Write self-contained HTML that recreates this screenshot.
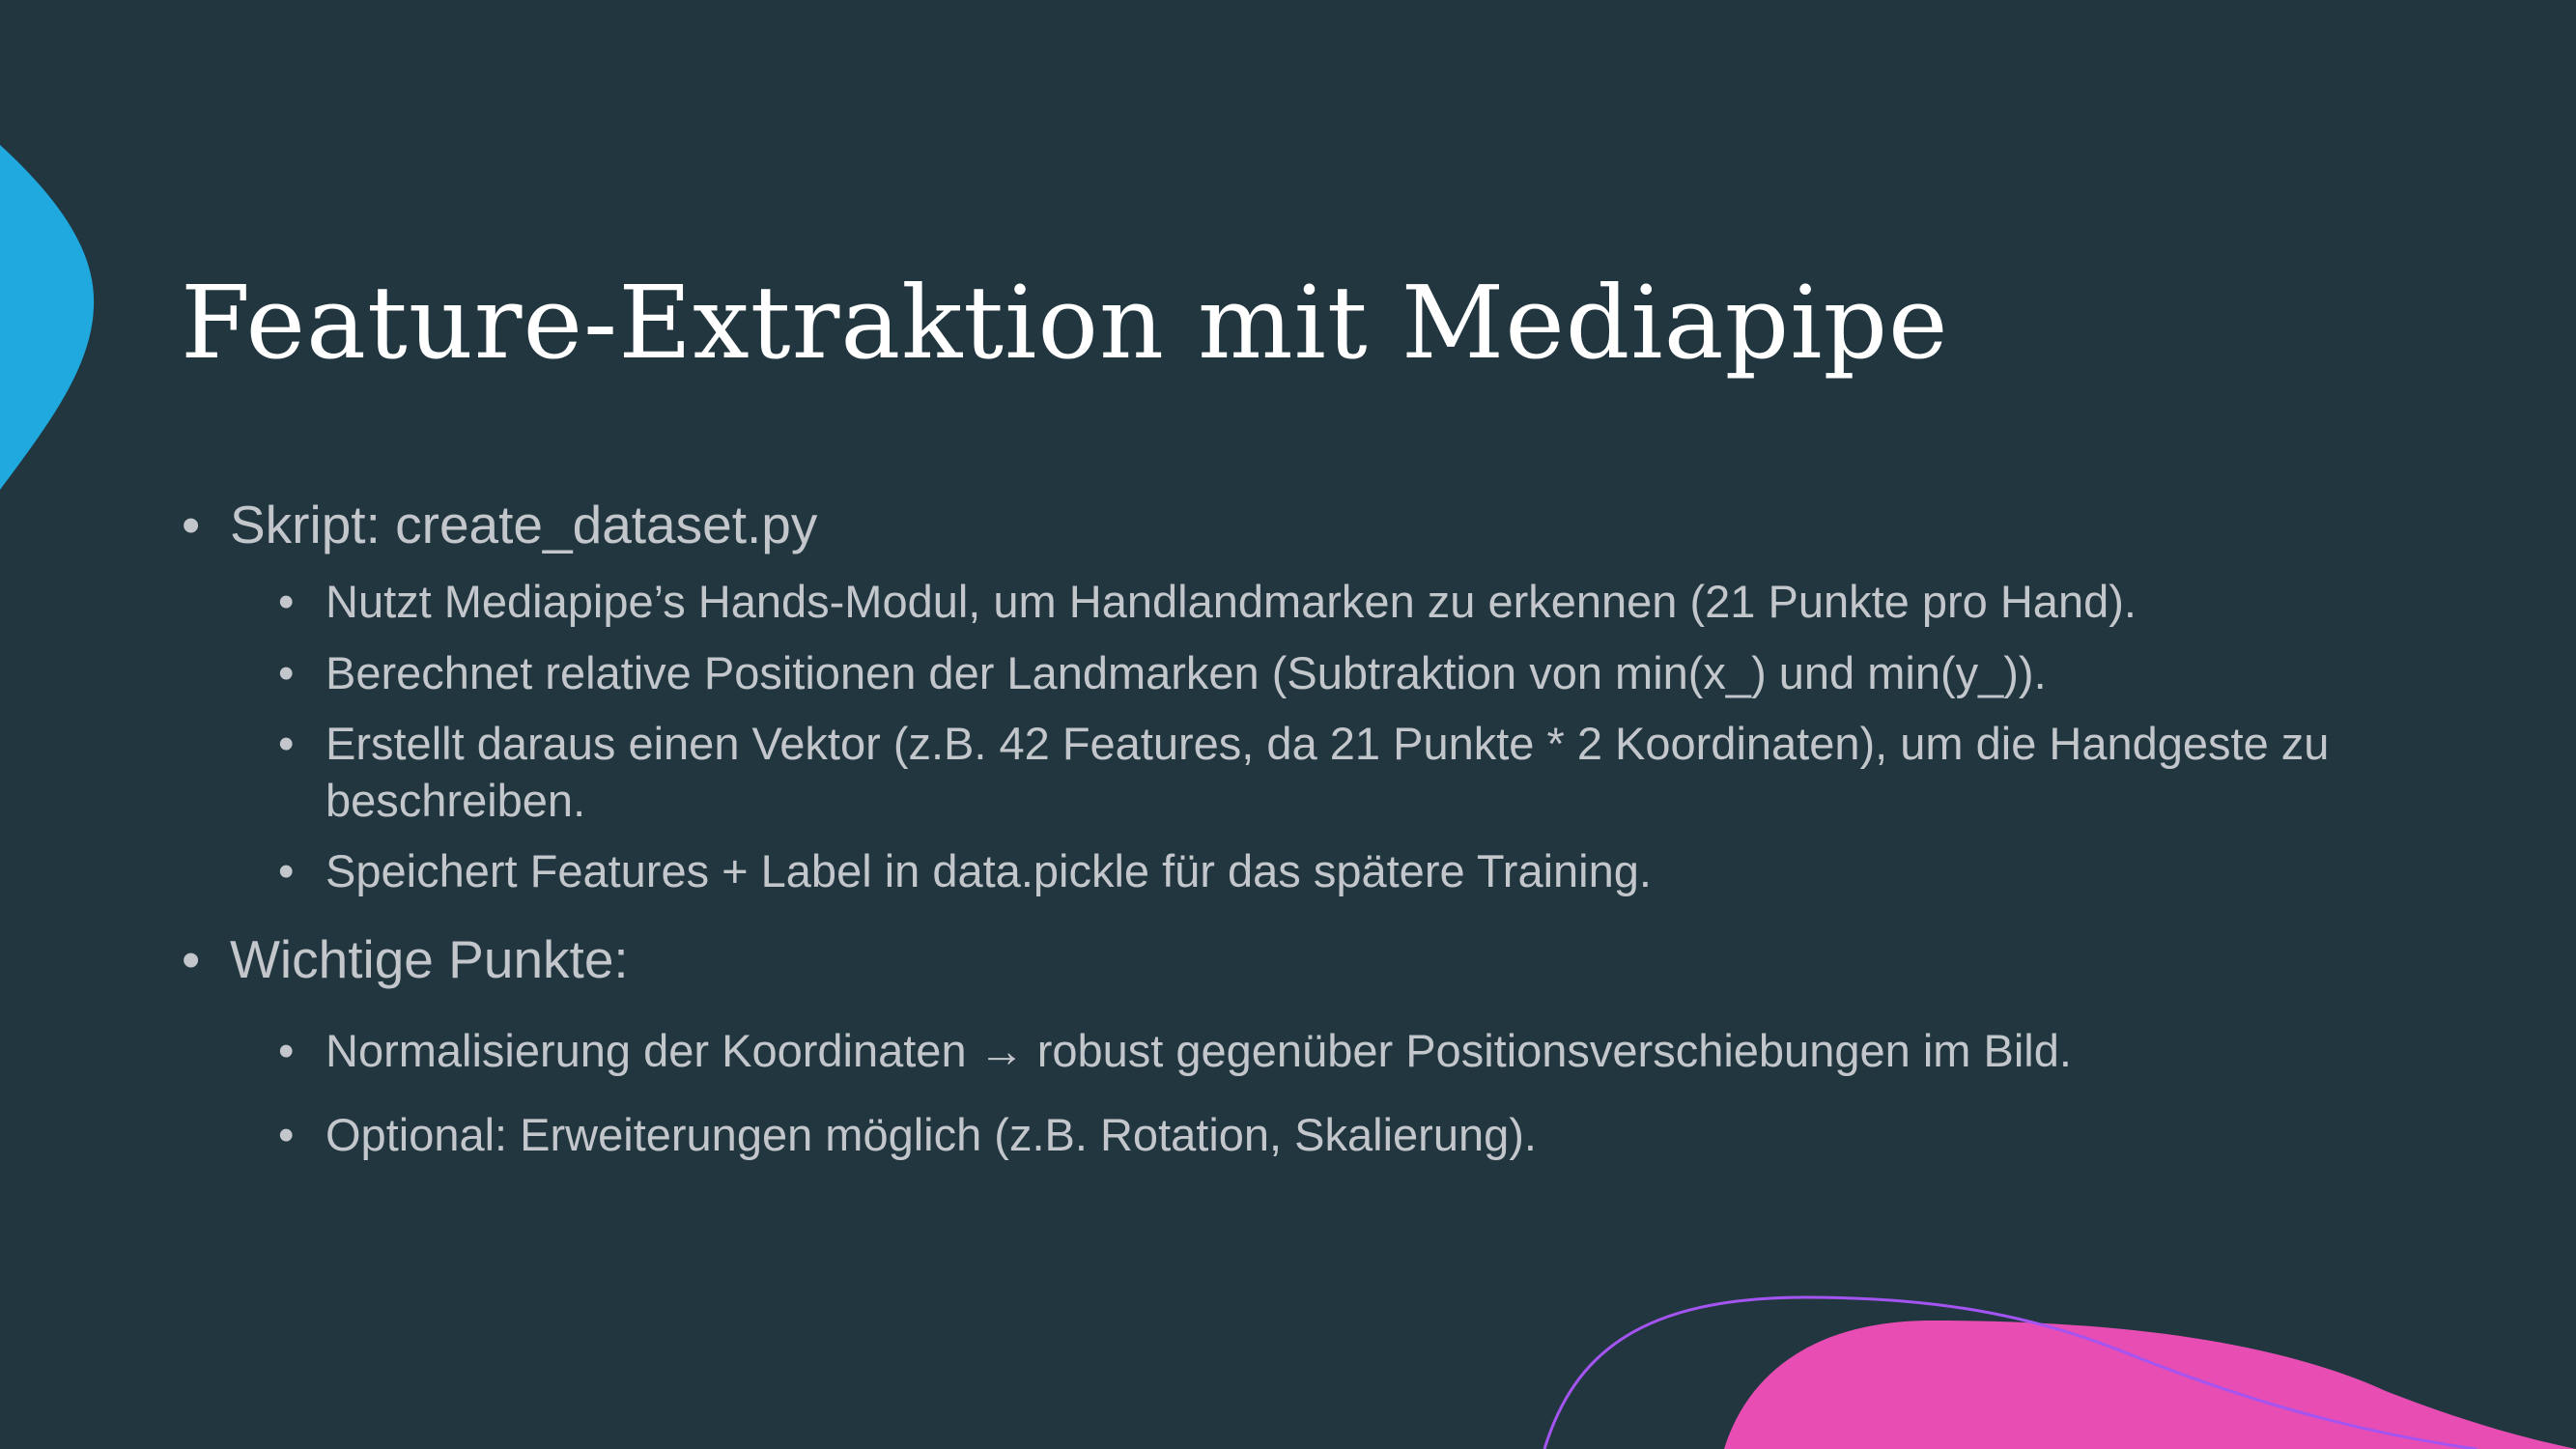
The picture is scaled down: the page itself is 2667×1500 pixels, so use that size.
<!DOCTYPE html>
<html><head><meta charset="utf-8"><style>
html,body{margin:0;padding:0}
body{width:2667px;height:1500px;background:#223640;position:relative;overflow:hidden;font-family:"Liberation Sans",Arial,sans-serif;color:#c3c7cb}
.t{position:absolute;line-height:1;white-space:nowrap}
.title{font-family:"DejaVu Serif","Liberation Serif",serif;font-size:104px;color:#fff;left:187px;top:282px;letter-spacing:1px}
.m{font-size:55px}
.s{font-size:47px}
</style></head><body>
<svg width="2667" height="1500" style="position:absolute;left:0;top:0">
<path d="M0,150 C60,205 100,260 97,318 C95,380 50,440 0,507 Z" fill="#1fa9de"/>
<path d="M1785,1500 C1810,1420 1880,1367 2000,1367 C2200,1367 2360,1390 2470,1440 C2560,1475 2620,1490 2667,1500 Z" fill="#e74db3"/>
<path d="M1599,1500 C1630,1400 1700,1343 1870,1343 C2000,1343 2100,1360 2200,1400 C2300,1440 2420,1480 2564,1500" fill="none" stroke="#a454f0" stroke-width="3"/>
</svg>
<div class="t title">Feature-Extraktion mit Mediapipe</div>
<div class="t m" style="left:188px;top:516px">•</div>
<div class="t m" style="left:238px;top:516px">Skript: create_dataset.py</div>
<div class="t s" style="left:288px;top:599px">•</div>
<div class="t s" style="left:337px;top:599px">Nutzt Mediapipe’s Hands-Modul, um Handlandmarken zu erkennen (21 Punkte pro Hand).</div>
<div class="t s" style="left:288px;top:673px">•</div>
<div class="t s" style="left:337px;top:673px">Berechnet relative Positionen der Landmarken (Subtraktion von min(x_) und min(y_)).</div>
<div class="t s" style="left:288px;top:746px">•</div>
<div class="t s" style="left:337px;top:746px">Erstellt daraus einen Vektor (z.B. 42 Features, da 21 Punkte * 2 Koordinaten), um die Handgeste zu</div>
<div class="t s" style="left:337px;top:805px">beschreiben.</div>
<div class="t s" style="left:288px;top:878px">•</div>
<div class="t s" style="left:337px;top:878px">Speichert Features + Label in data.pickle für das spätere Training.</div>
<div class="t m" style="left:188px;top:966px">•</div>
<div class="t m" style="left:238px;top:966px">Wichtige Punkte:</div>
<div class="t s" style="left:288px;top:1064px">•</div>
<div class="t s" style="left:337px;top:1064px">Normalisierung der Koordinaten → robust gegenüber Positionsverschiebungen im Bild.</div>
<div class="t s" style="left:288px;top:1151px">•</div>
<div class="t s" style="left:337px;top:1151px">Optional: Erweiterungen möglich (z.B. Rotation, Skalierung).</div>
</body></html>
